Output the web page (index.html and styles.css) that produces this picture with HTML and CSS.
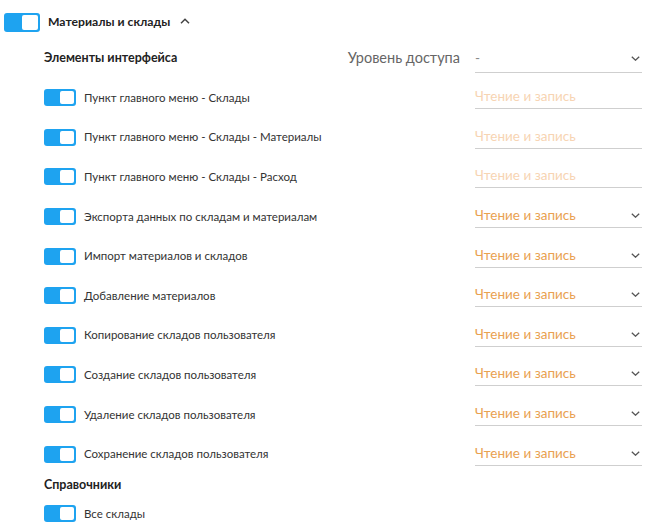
FILE: index.html
```html
<!DOCTYPE html>
<html lang="ru">
<head>
<meta charset="utf-8">
<link rel="stylesheet" href="styles.css">
</head>
<body>
<div class="page">
  <div class="group-head">
    <span class="toggle toggle-lg"><span class="knob"></span></span>
    <span class="group-title">Материалы и склады</span>
    <svg class="caret" width="10" height="6" viewBox="0 0 10 6"><path d="M1 5.2 L5 1.2 L9 5.2" fill="none" stroke="#444" stroke-width="1.5"/></svg>
  </div>

  <div class="section">
    <div class="sec-head">
      <span class="sec-title">Элементы интерфейса</span>
      <span class="level-label">Уровень доступа</span>
      <div class="select select-head">
        <span class="val val-dash">-</span>
        <svg class="chev" width="9" height="5" viewBox="0 0 9 5"><path d="M0.8 0.8 L4.5 4.2 L8.2 0.8" fill="none" stroke="#555" stroke-width="1.3"/></svg>
      </div>
    </div>

    <div class="rows">
      <div class="row">
        <span class="toggle"><span class="knob"></span></span>
        <span class="label">Пункт главного меню - Склады</span>
        <div class="select disabled"><span class="val">Чтение и запись</span></div>
      </div>
      <div class="row">
        <span class="toggle"><span class="knob"></span></span>
        <span class="label">Пункт главного меню - Склады - Материалы</span>
        <div class="select disabled"><span class="val">Чтение и запись</span></div>
      </div>
      <div class="row">
        <span class="toggle"><span class="knob"></span></span>
        <span class="label">Пункт главного меню - Склады - Расход</span>
        <div class="select disabled"><span class="val">Чтение и запись</span></div>
      </div>
      <div class="row">
        <span class="toggle"><span class="knob"></span></span>
        <span class="label">Экспорта данных по складам и материалам</span>
        <div class="select"><span class="val">Чтение и запись</span><svg class="chev" width="9" height="5" viewBox="0 0 9 5"><path d="M0.8 0.8 L4.5 4.2 L8.2 0.8" fill="none" stroke="#555" stroke-width="1.3"/></svg></div>
      </div>
      <div class="row">
        <span class="toggle"><span class="knob"></span></span>
        <span class="label">Импорт материалов и складов</span>
        <div class="select"><span class="val">Чтение и запись</span><svg class="chev" width="9" height="5" viewBox="0 0 9 5"><path d="M0.8 0.8 L4.5 4.2 L8.2 0.8" fill="none" stroke="#555" stroke-width="1.3"/></svg></div>
      </div>
      <div class="row">
        <span class="toggle"><span class="knob"></span></span>
        <span class="label">Добавление материалов</span>
        <div class="select"><span class="val">Чтение и запись</span><svg class="chev" width="9" height="5" viewBox="0 0 9 5"><path d="M0.8 0.8 L4.5 4.2 L8.2 0.8" fill="none" stroke="#555" stroke-width="1.3"/></svg></div>
      </div>
      <div class="row">
        <span class="toggle"><span class="knob"></span></span>
        <span class="label">Копирование складов пользователя</span>
        <div class="select"><span class="val">Чтение и запись</span><svg class="chev" width="9" height="5" viewBox="0 0 9 5"><path d="M0.8 0.8 L4.5 4.2 L8.2 0.8" fill="none" stroke="#555" stroke-width="1.3"/></svg></div>
      </div>
      <div class="row">
        <span class="toggle"><span class="knob"></span></span>
        <span class="label">Создание складов пользователя</span>
        <div class="select"><span class="val">Чтение и запись</span><svg class="chev" width="9" height="5" viewBox="0 0 9 5"><path d="M0.8 0.8 L4.5 4.2 L8.2 0.8" fill="none" stroke="#555" stroke-width="1.3"/></svg></div>
      </div>
      <div class="row">
        <span class="toggle"><span class="knob"></span></span>
        <span class="label">Удаление складов пользователя</span>
        <div class="select"><span class="val">Чтение и запись</span><svg class="chev" width="9" height="5" viewBox="0 0 9 5"><path d="M0.8 0.8 L4.5 4.2 L8.2 0.8" fill="none" stroke="#555" stroke-width="1.3"/></svg></div>
      </div>
      <div class="row">
        <span class="toggle"><span class="knob"></span></span>
        <span class="label">Сохранение складов пользователя</span>
        <div class="select"><span class="val">Чтение и запись</span><svg class="chev" width="9" height="5" viewBox="0 0 9 5"><path d="M0.8 0.8 L4.5 4.2 L8.2 0.8" fill="none" stroke="#555" stroke-width="1.3"/></svg></div>
      </div>
    </div>

    <div class="sub-title">Справочники</div>
    <div class="row row-last">
      <span class="toggle"><span class="knob"></span></span>
      <span class="label">Все склады</span>
    </div>
  </div>
</div>
</body>
</html>
```
FILE: styles.css
```css
html, body {
  margin: 0;
  padding: 0;
  background: #fff;
}
body {
  font-family: "Lato", "Liberation Sans", sans-serif;
  color: #333;
  width: 658px;
  height: 531px;
  overflow: hidden;
}
.page {
  padding-top: 13px;
}
.group-head {
  display: flex;
  align-items: center;
  height: 18px;
  padding-left: 4px;
}
.toggle {
  display: inline-flex;
  justify-content: flex-end;
  align-items: center;
  box-sizing: border-box;
  width: 32px;
  height: 17px;
  padding: 2px;
  background: #1ea3f0;
  border-radius: 3px;
  flex: none;
}
.toggle .knob {
  display: block;
  width: 14px;
  height: 13px;
  background: #fff;
  border-radius: 2px;
}
.toggle-lg {
  width: 36px;
  height: 19px;
}
.toggle-lg .knob {
  width: 16px;
  height: 15px;
}
.group-title {
  margin-left: 8px;
  font-size: 12.2px;
  font-weight: 700;
  color: #222;
  line-height: 18px;
}
.caret {
  margin-left: 10px;
  margin-top: -2px;
}
.section {
  padding-left: 44px;
  padding-right: 16px;
  padding-top: 17px;
}
.sec-head {
  display: flex;
  align-items: flex-start;
  height: 25px;
}
.sec-title {
  font-size: 12.5px;
  font-weight: 700;
  color: #222;
  line-height: 20px;
  flex: 1;
}
.level-label {
  font-size: 14.5px;
  color: #666;
  line-height: 20px;
  margin-right: 15px;
}
.select {
  box-sizing: border-box;
  width: 167px;
  height: 23px;
  border-bottom: 1px solid #cfcfcf;
  display: flex;
  align-items: flex-start;
  justify-content: space-between;
  padding-right: 2px;
  flex: none;
}
.select-head {
  height: 25px;
}
.val {
  font-size: 13.5px;
  line-height: 20px;
  color: #e9a150;
}
.val-dash {
  color: #888;
}
.select.disabled .val {
  color: #f7d4b3;
}
.chev {
  margin-top: 8px;
}
.rows {
  padding-top: 5px;
}
.row {
  display: flex;
  align-items: center;
  height: 39.6px;
}
.label {
  flex: 1;
  margin-left: 8px;
  font-size: 11.5px;
  color: #333;
  line-height: 16px;
}
.sub-title {
  font-size: 12.5px;
  font-weight: 700;
  color: #222;
  line-height: 20px;
  margin-top: 1px;
}
.row-last {
  height: 24px;
  margin-top: 7px;
}
```
